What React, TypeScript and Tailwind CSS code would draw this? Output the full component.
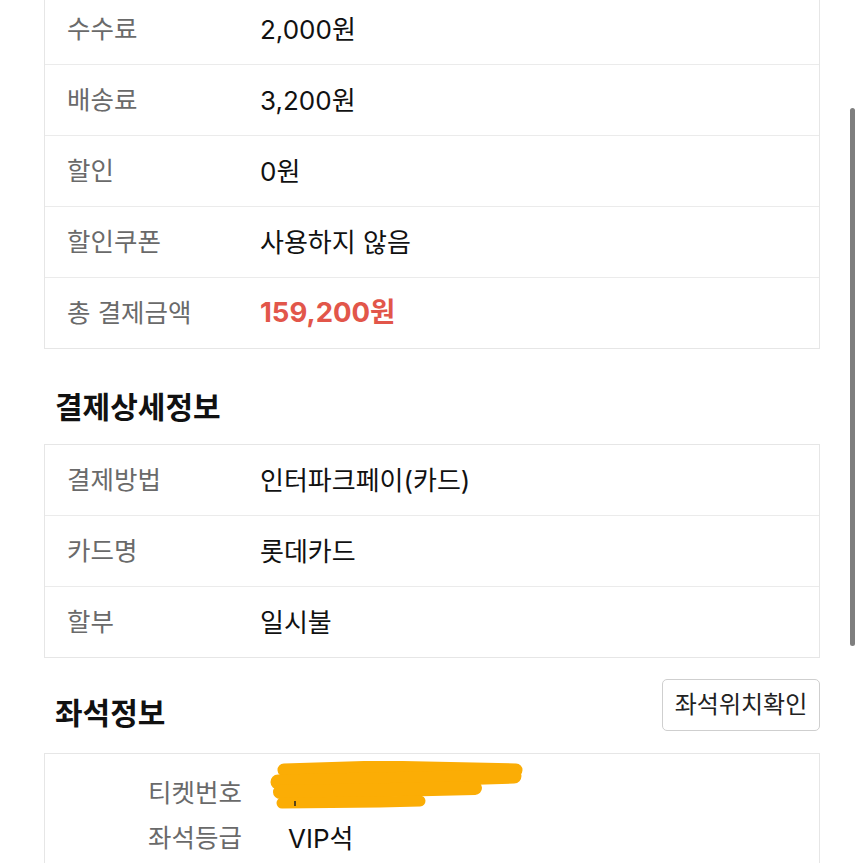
import React from 'react';

const font = "font-['Inter','Noto_Sans_CJK_KR',sans-serif]";

type Row = { label: string; value: string; highlight?: boolean };

const feeRows: Row[] = [
  { label: '수수료', value: '2,000원' },
  { label: '배송료', value: '3,200원' },
  { label: '할인', value: '0원' },
  { label: '할인쿠폰', value: '사용하지 않음' },
  { label: '총 결제금액', value: '159,200원', highlight: true },
];

const payRows: Row[] = [
  { label: '결제방법', value: '인터파크페이(카드)' },
  { label: '카드명', value: '롯데카드' },
  { label: '할부', value: '일시불' },
];

const InfoTable: React.FC<{ rows: Row[] }> = ({ rows }) => (
  <div className="border border-[#e6e6e6] bg-white">
    {rows.map((row, i) => (
      <div
        key={row.label}
        className={`flex items-center ${i > 0 ? 'h-[71px] border-t border-[#ebebeb]' : 'h-[70px]'}`}
      >
        <div className="w-[215px] pl-[22px] text-[25.5px] text-[#6a6a6a]">{row.label}</div>
        <div
          className={
            row.highlight
              ? 'text-[27.5px] font-bold text-[#e2564a]'
              : 'text-[26px] text-[#111]'
          }
        >
          {row.value}
        </div>
      </div>
    ))}
  </div>
);

// masked ticket number
const Scribble: React.FC = () => (
  <svg width="262" height="50" viewBox="0 0 262 50" className="absolute left-[-18px] top-[-18px]">
    <g stroke="#fbad05" strokeLinecap="round" strokeLinejoin="round" fill="none">
      <path d="M14 9 L110 6 L246 9" strokeWidth="13" />
      <path d="M8 21 L150 18 L244 15" strokeWidth="15" />
      <path d="M10 31 L120 29 L205 27" strokeWidth="14" />
      <path d="M12 42 L110 41 L150 40" strokeWidth="11" />
    </g>
    <path d="M25 40 L25 45" stroke="#222" strokeWidth="1.5" />
  </svg>
);

const App: React.FC = () => {
  return (
    <div className={`relative h-[863px] w-[863px] overflow-hidden bg-white ${font}`}>
      <div className="ml-[44px] mr-[43px] -mt-[7px]">
        <InfoTable rows={feeRows} />

        {/* 결제상세정보 */}
        <h2 className="mt-[38px] mb-[17px] pl-[11px] text-[30px] font-bold leading-[40px] text-[#111]">
          결제상세정보
        </h2>
        <InfoTable rows={payRows} />

        {/* 좌석정보 */}
        <div className="mt-[21px] mb-[22px] flex items-end justify-between">
          <h2 className="-mb-[2px] pl-[11px] text-[30px] font-bold leading-[40px] text-[#111]">좌석정보</h2>
          <button
            type="button"
            className="h-[52px] w-[158px] rounded-[5px] border border-[#cfcfcf] bg-white text-[24px] text-[#222]"
          >
            좌석위치확인
          </button>
        </div>

        <div className="border border-[#e6e6e6] bg-white pt-[17px] pb-[40px]">
          <div className="flex h-[45px] items-center pl-[103px]">
            <div className="w-[140px] text-[25.5px] text-[#6a6a6a]">티켓번호</div>
            <div className="relative h-[30px] w-[220px]">
              <Scribble />
            </div>
          </div>
          <div className="flex h-[45px] items-center pl-[103px]">
            <div className="w-[140px] text-[25.5px] text-[#6a6a6a]">좌석등급</div>
            <div className="text-[26px] text-[#111]">VIP석</div>
          </div>
        </div>
      </div>

      {/* scrollbar overlay */}
      <div className="absolute right-[8px] top-[108px] h-[538px] w-[5px] rounded-full bg-[#7f7f7f]" />
    </div>
  );
};

export default App;
